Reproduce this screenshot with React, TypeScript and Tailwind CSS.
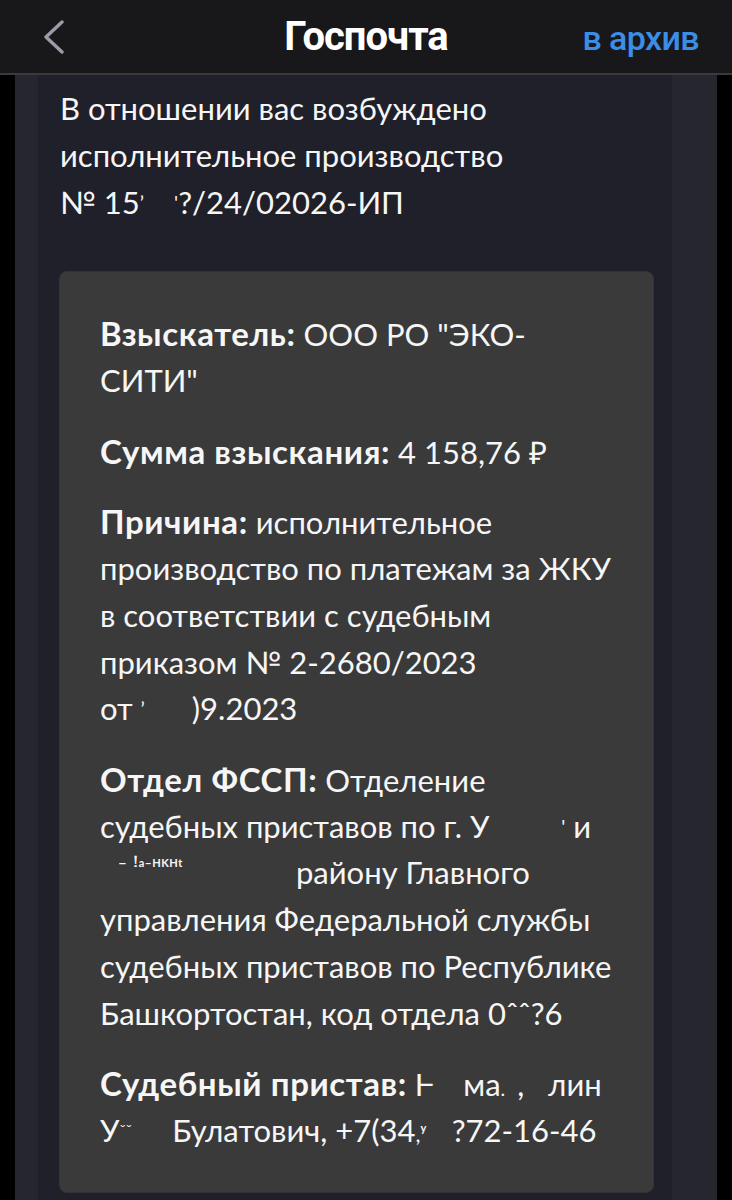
import type { ReactNode } from 'react'

// Gap standing in for a blurred / redacted piece of text
const Gap = ({ w }: { w: string }) => <span className={`inline-block ${w}`} />

const Line = ({ children }: { children: ReactNode }) => (
  <div className="h-[46.8px] whitespace-pre leading-[46.8px]">{children}</div>
)

const Label = ({ children }: { children: ReactNode }) => (
  <span className="text-[33px] font-bold tracking-[0.6px]">{children}</span>
)

const Header = () => (
  <header className="relative flex h-[75px] items-center justify-center border-b-2 border-[#3a3a3e] bg-[#18181a]">
    <button type="button" aria-label="Назад" className="absolute left-[38px] top-[14px] p-1">
      <svg width="24" height="36" viewBox="0 0 24 36" fill="none">
        <polyline
          points="20,4 4,19 20,34"
          stroke="#9c9ca8"
          strokeWidth="3.4"
          strokeLinecap="round"
          strokeLinejoin="round"
        />
      </svg>
    </button>
    <h1 className="font-['Roboto'] text-[40px] font-bold tracking-[-1px] text-white">Госпочта</h1>
    <span className="absolute right-[33px] top-[13px] font-['Roboto'] text-[34px] font-medium tracking-[-0.6px] text-[#3b8ee8]">
      в архив
    </span>
  </header>
)

export default function App() {
  return (
    <div className="min-h-[1200px] bg-black font-['Lato',sans-serif] text-[31px] text-[#f6f6f6]">
      <Header />

      <div className="ml-[15px] w-[702px] bg-[#25262e] pl-[23px] pr-[45px]">
        <div className="bg-[#1f2029] pl-[21px] pr-[18px] pt-[10px] pb-[8px]">
          <div className="pl-px">
            <Line>В отношении вас возбуждено</Line>
            <Line>исполнительное производство</Line>
            <Line>
              № 15<span className="text-[20px] align-top">’</span>
              <Gap w="w-[30px]" />
              <span className="text-[20px] align-top">'</span>?/24/02026-ИП
            </Line>
          </div>

          <div className="mt-[46px] rounded-lg border border-[#333336] bg-[#3a3a3a] px-[40px] pt-[38px] pb-[38px]">
            <Line>
              <Label>Взыскатель:</Label> ООО РО "ЭКО-
            </Line>
            <Line>СИТИ"</Line>

            <div className="mt-[24px]">
              <Line>
                <Label>Сумма взыскания:</Label> 4 158,76 ₽
              </Line>
            </div>

            <div className="mt-[23.5px]">
              <Line>
                <Label>Причина:</Label> исполнительное
              </Line>
              <Line>производство по платежам за ЖКУ</Line>
              <Line>в соответствии с судебным</Line>
              <Line>приказом № 2-2680/2023</Line>
              <Line>
                от <span className="text-[20px] align-top">’</span>
                <Gap w="w-[47px]" />
                )9.2023
              </Line>
            </div>

            <div className="mt-[23.5px]">
              <Line>
                <Label>Отдел ФССП:</Label> Отделение
              </Line>
              <Line>
                судебных приставов по г. У<Gap w="w-[72px]" />
                <span className="text-[20px] align-top">'</span> и
              </Line>
              <Line>
                <span className="inline-block w-[196px] pl-[18px] align-top text-[22px] leading-[40px]">
                  ˉ ꜝᵃ⁻ᴴᴷᴴᵗ
                </span>
                району Главного
              </Line>
              <Line>управления Федеральной службы</Line>
              <Line>судебных приставов по Республике</Line>
              <Line>Башкортостан, код отдела 0ˆˆ?6</Line>
            </div>

            <div className="mt-[23.5px]">
              <Line>
                <Label>Судебный пристав:</Label> Ⱶ<Gap w="w-[30px]" />ма<span className="text-[20px]">.</span>
                <Gap w="w-[12px]" />,<Gap w="w-[24px]" />лин
              </Line>
              <Line>
                У<span className="text-[16px] align-top">ˇˇ</span>
                <Gap w="w-[40px]" />
                Булатович, +7(34<span className="text-[22px]">,ʸ</span>
                <Gap w="w-[25px]" />
                ?72-16-46
              </Line>
            </div>
          </div>
        </div>
      </div>
    </div>
  )
}
